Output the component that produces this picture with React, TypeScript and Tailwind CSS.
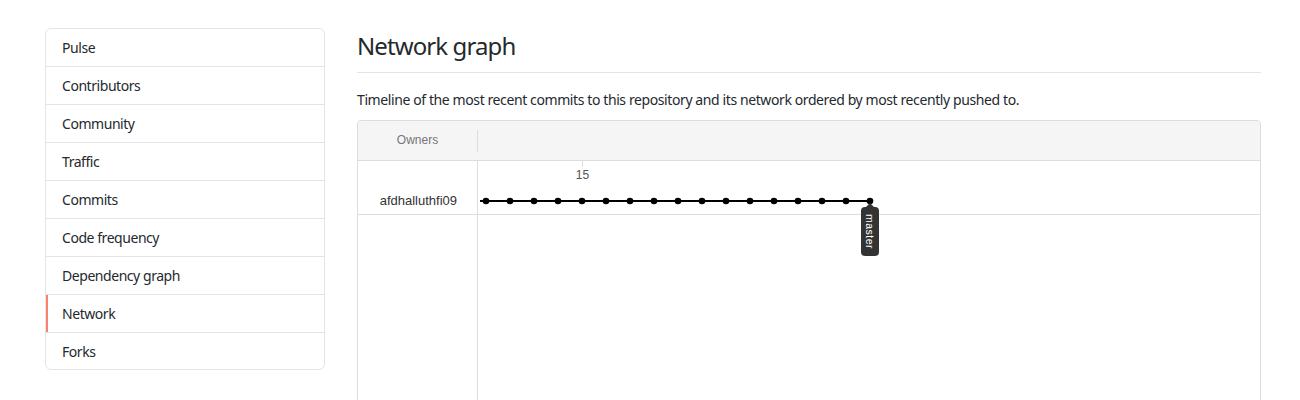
import React from "react";

const items = [
  "Pulse",
  "Contributors",
  "Community",
  "Traffic",
  "Commits",
  "Code frequency",
  "Dependency graph",
  "Network",
  "Forks",
];

export default function App() {
  const dots = Array.from({ length: 17 }, (_, i) => 8 + i * 24);
  return (
    <div
      className="flex w-[1300px] h-[400px] overflow-hidden bg-white pt-[28px] pl-[45px] text-[#24292e]"
      style={{ fontFamily: '"Noto Sans", "Liberation Sans", sans-serif' }}
    >
      <nav className="w-[280px] shrink-0 self-start rounded-md border border-[#e1e4e8] overflow-hidden">
        {items.map((it, i) => (
          <div
            key={it}
            className={`relative flex items-center pl-[16px] text-[14px] tracking-[-0.45px] ${
              i < items.length - 1 ? "h-[38px] border-b border-[#e1e4e8]" : "h-[36px]"
            }`}
          >
            {it === "Network" && (
              <span className="absolute left-0 top-0 bottom-0 w-[2px] bg-[#f9826c]" />
            )}
            {it}
          </div>
        ))}
      </nav>
      <main className="ml-[32px] w-[904px] shrink-0">
        <div className="border-b border-[#e1e4e8] pb-[8px] mb-[16px]">
          <h2 className="text-[24px] leading-[36px] font-normal tracking-[-0.9px]">Network graph</h2>
        </div>
        <p className="text-[14px] leading-[21px] mb-[10px] tracking-[-0.4px]">
          Timeline of the most recent commits to this repository and its network ordered by most recently pushed to.
        </p>
        <div
          className="border border-[#dddddd] rounded-t-[4px] h-[400px]"
          style={{ fontFamily: '"Liberation Sans", Arial, sans-serif' }}
        >
          <div className="flex h-[40px] items-center bg-[#f5f5f5] border-b border-[#dddddd] rounded-t-[4px]">
            <div className="w-[119px] text-center text-[12px] text-[#777777] -mt-[1px]">Owners</div>
            <div className="w-px h-[22px] bg-[#dddddd]" />
          </div>
          <div className="flex h-[54px] border-b border-[#dddddd]">
            <div className="w-[120px] shrink-0 border-r border-[#dddddd] flex items-end justify-end pr-[20px] pb-[4px] text-[13px] text-[#333333]">
              afdhalluthfi09
            </div>
            <div className="relative flex-1">
              <svg width="780" height="53" className="overflow-visible absolute left-0 top-0">
                <line x1="104.5" y1="0" x2="104.5" y2="6" stroke="#dddddd" strokeWidth="1" />
                <text x="104.5" y="18" textAnchor="middle" fontSize="12" fill="#555555" fontFamily="Liberation Sans, Arial, sans-serif">
                  15
                </text>
                <line x1="2" y1="40" x2="392" y2="40" stroke="#000" strokeWidth="2" />
                {dots.map((x) => (
                  <circle key={x} cx={x} cy={40} r={3.3} fill="#000" />
                ))}
                <path d="M387 47 L392 42 L397 47 Z" fill="#333" />
                <rect x="383" y="46" width="18" height="49" rx="4" fill="#333" />
                <text
                  x="392"
                  y="70.5"
                  transform="rotate(90 392 70.5)"
                  textAnchor="middle"
                  dominantBaseline="central"
                  fontSize="10.5"
                  letterSpacing="0.5"
                  fill="#fff"
                  fontFamily="Liberation Sans, Arial, sans-serif"
                >
                  master
                </text>
              </svg>
            </div>
          </div>
          <div className="flex h-full">
            <div className="w-[120px] shrink-0 border-r border-[#dddddd]" />
          </div>
        </div>
      </main>
    </div>
  );
}
